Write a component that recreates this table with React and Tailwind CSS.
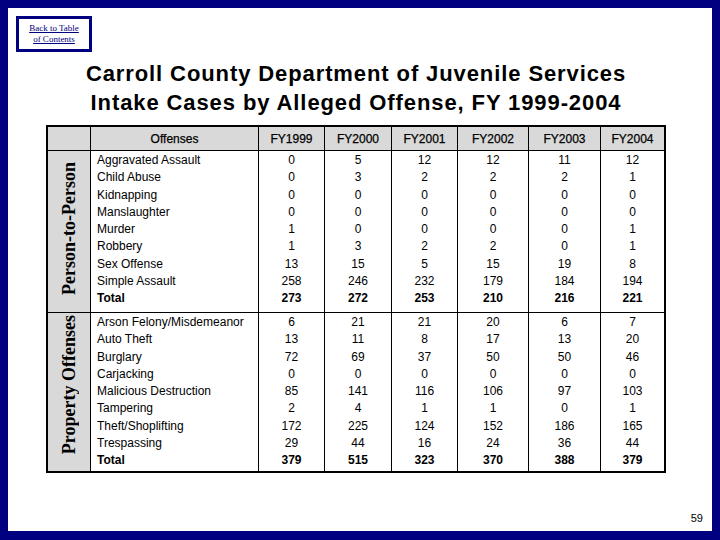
const years = ['FY1999', 'FY2000', 'FY2001', 'FY2002', 'FY2003', 'FY2004'];

const colClasses = [
  'w-[66px] border-r border-black',
  'w-[67px] border-r border-black',
  'w-[66px] border-r border-black',
  'w-[71px] border-r border-black',
  'w-[72px] border-r border-black',
  'w-[63px]',
];

const sections = [
  {
    label: 'Person-to-Person',
    box: 'h-[162px] border-b border-black',
    labelPad: 'pb-[6px]',
    rows: [
      ['Aggravated Assault', [0, 5, 12, 12, 11, 12]],
      ['Child Abuse', [0, 3, 2, 2, 2, 1]],
      ['Kidnapping', [0, 0, 0, 0, 0, 0]],
      ['Manslaughter', [0, 0, 0, 0, 0, 0]],
      ['Murder', [1, 0, 0, 0, 0, 1]],
      ['Robbery', [1, 3, 2, 2, 0, 1]],
      ['Sex Offense', [13, 15, 5, 15, 19, 8]],
      ['Simple Assault', [258, 246, 232, 179, 184, 194]],
    ],
    total: [273, 272, 253, 210, 216, 221],
  },
  {
    label: 'Property Offenses',
    box: 'h-[158px]',
    labelPad: 'pb-[14px]',
    rows: [
      ['Arson Felony/Misdemeanor', [6, 21, 21, 20, 6, 7]],
      ['Auto Theft', [13, 11, 8, 17, 13, 20]],
      ['Burglary', [72, 69, 37, 50, 50, 46]],
      ['Carjacking', [0, 0, 0, 0, 0, 0]],
      ['Malicious Destruction', [85, 141, 116, 106, 97, 103]],
      ['Tampering', [2, 4, 1, 1, 0, 1]],
      ['Theft/Shoplifting', [172, 225, 124, 152, 186, 165]],
      ['Trespassing', [29, 44, 16, 24, 36, 44]],
    ],
    total: [379, 515, 323, 370, 388, 379],
  },
];

function Section({ section }) {
  const { label, box, labelPad, rows, total } = section;
  return (
    <div className={`flex ${box}`}>
      <div className={`w-[43px] border-r border-black bg-[#d9d9d9] flex items-center justify-center ${labelPad}`}>
        <span className="[writing-mode:vertical-rl] rotate-180 font-['Liberation_Serif',serif] font-bold text-[18px] leading-none">
          {label}
        </span>
      </div>
      <div className="w-[168px] border-r border-black pl-[6px] pt-[1px]">
        {rows.map(([name]) => (
          <div key={name} className="h-[17.3px] leading-[17.3px] whitespace-nowrap">{name}</div>
        ))}
        <div className="h-[17.3px] leading-[17.3px] font-bold">Total</div>
      </div>
      {colClasses.map((cls, i) => (
        <div key={i} className={`${cls} pt-[1px] text-center`}>
          {rows.map(([name, vals]) => (
            <div key={name} className="h-[17.3px] leading-[17.3px]">{vals[i]}</div>
          ))}
          <div className="h-[17.3px] leading-[17.3px] font-bold">{total[i]}</div>
        </div>
      ))}
    </div>
  );
}

export default function App() {
  return (
    <div className="w-[720px] h-[540px] bg-[#000080] pt-[8px] px-[8px] pb-[9px] font-['Liberation_Sans',Arial,sans-serif] text-black">
      <div className="h-full bg-white flex flex-col">
        <div className="ml-[8px] mt-[8px] w-[76px] h-[36px] border-[3px] border-[#000080] flex flex-col items-center justify-center font-['Liberation_Serif',serif] text-[9px] leading-[11px] text-[#000080] underline">
          <span>Back to Table</span>
          <span>of Contents</span>
        </div>

        <h1 className="mt-[7px] pr-[8px] text-center font-bold text-[22px] leading-[29px] tracking-[0.9px]">
          Carroll County Department of Juvenile Services
          <br />
          Intake Cases by Alleged Offense, FY 1999-2004
        </h1>

        <div className="mt-[8px] ml-[38px] w-[620px] border-2 border-black text-[12px]">
          <div className="flex h-[24px] border-b border-black bg-[#d9d9d9] [-webkit-text-stroke:0.25px_black]">
            <div className="w-[43px] border-r border-black" />
            <div className="w-[168px] border-r border-black flex items-center justify-center">Offenses</div>
            {colClasses.map((cls, i) => (
              <div key={years[i]} className={`${cls} flex items-center justify-center`}>{years[i]}</div>
            ))}
          </div>
          {sections.map((s) => (
            <Section key={s.label} section={s} />
          ))}
        </div>

        <div className="mt-auto pb-[6px] pr-[9px] flex justify-end text-[11px] leading-[13px]">59</div>
      </div>
    </div>
  );
}
